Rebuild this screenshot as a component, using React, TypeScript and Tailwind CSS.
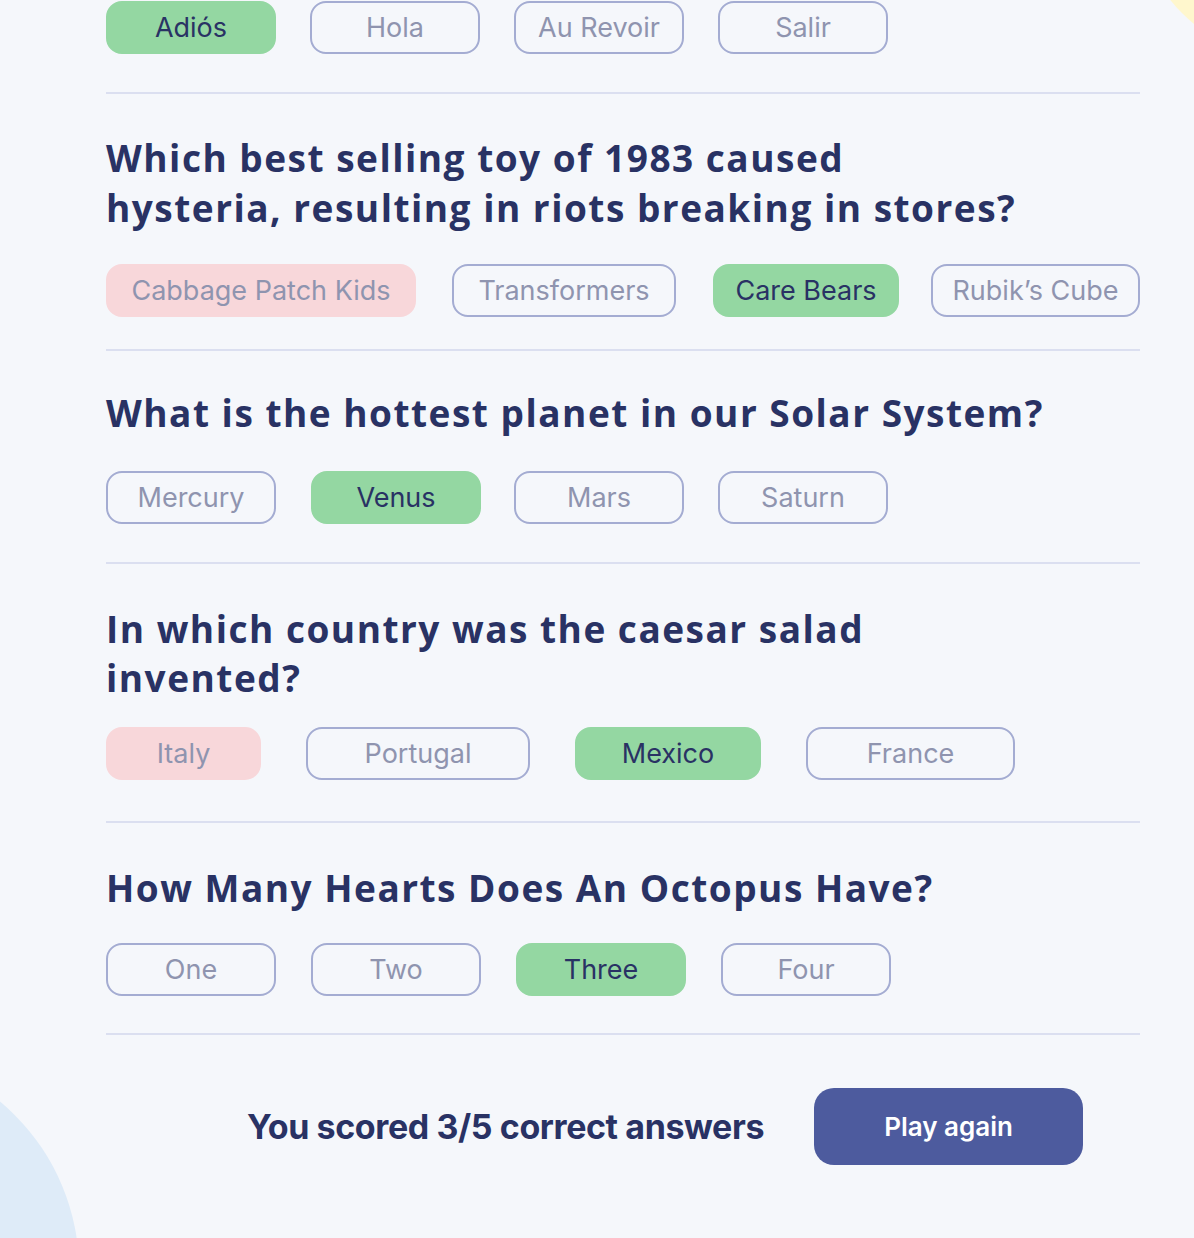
import React from "react";

type Kind = "plain" | "correct" | "wrong";

interface Answer {
  label: string;
  kind: Kind;
  cls: string;
}

interface Question {
  title?: string;
  titleCls: string;
  rowCls: string;
  dividerCls: string;
  answers: Answer[];
}

const questions: Question[] = [
  {
    titleCls: "",
    rowCls: "mt-[1px]",
    dividerCls: "mt-[38px]",
    answers: [
      { label: "Adiós", kind: "correct", cls: "w-[170px]" },
      { label: "Hola", kind: "plain", cls: "w-[170px] ml-[34px]" },
      { label: "Au Revoir", kind: "plain", cls: "w-[170px] ml-[34px]" },
      { label: "Salir", kind: "plain", cls: "w-[170px] ml-[34px]" },
    ],
  },
  {
    title: "Which best selling toy of 1983 caused hysteria, resulting in riots breaking in stores?",
    titleCls: "mt-[39px] max-w-[920px]",
    rowCls: "mt-[31px]",
    dividerCls: "mt-[32px]",
    answers: [
      { label: "Cabbage Patch Kids", kind: "wrong", cls: "w-[310px]" },
      { label: "Transformers", kind: "plain", cls: "w-[224px] ml-[36px]" },
      { label: "Care Bears", kind: "correct", cls: "w-[186px] ml-[37px]" },
      { label: "Rubik’s Cube", kind: "plain", cls: "w-[209px] ml-[32px]" },
    ],
  },
  {
    title: "What is the hottest planet in our Solar System?",
    titleCls: "mt-[37px]",
    rowCls: "mt-[33px]",
    dividerCls: "mt-[38px]",
    answers: [
      { label: "Mercury", kind: "plain", cls: "w-[170px]" },
      { label: "Venus", kind: "correct", cls: "w-[170px] ml-[35px]" },
      { label: "Mars", kind: "plain", cls: "w-[170px] ml-[33px]" },
      { label: "Saturn", kind: "plain", cls: "w-[170px] ml-[34px]" },
    ],
  },
  {
    title: "In which country was the caesar salad invented?",
    titleCls: "mt-[40px] max-w-[820px] !leading-[49px]",
    rowCls: "mt-[25px]",
    dividerCls: "mt-[41px]",
    answers: [
      { label: "Italy", kind: "wrong", cls: "w-[155px]" },
      { label: "Portugal", kind: "plain", cls: "w-[224px] ml-[45px]" },
      { label: "Mexico", kind: "correct", cls: "w-[186px] ml-[45px]" },
      { label: "France", kind: "plain", cls: "w-[209px] ml-[45px]" },
    ],
  },
  {
    title: "How Many Hearts Does An Octopus Have?",
    titleCls: "mt-[40px]",
    rowCls: "mt-[30px]",
    dividerCls: "mt-[37px]",
    answers: [
      { label: "One", kind: "plain", cls: "w-[170px]" },
      { label: "Two", kind: "plain", cls: "w-[170px] ml-[35px]" },
      { label: "Three", kind: "correct", cls: "w-[170px] ml-[35px]" },
      { label: "Four", kind: "plain", cls: "w-[170px] ml-[35px]" },
    ],
  },
];

function AnswerPill({ answer }: { answer: Answer }) {
  const look =
    answer.kind === "correct"
      ? "bg-[#94d7a2] text-[#293264] border-[#94d7a2]"
      : answer.kind === "wrong"
      ? "bg-[#f8d7da] text-[#8f94af] border-[#f8d7da]"
      : "bg-transparent text-[#8f94af] border-[#a4acd2]";
  return (
    <div
      className={`h-[53px] shrink-0 rounded-[16px] border-[2px] flex items-center justify-center text-[27px] leading-none ${look} ${answer.cls}`}
    >
      {answer.label}
    </div>
  );
}

export default function App() {
  return (
    <div
      className="relative w-[1194px] h-[1238px] overflow-hidden bg-[#f5f7fb]"
      style={{ fontFamily: "Inter, 'Liberation Sans', sans-serif" }}
    >
      {/* decorative blobs */}
      <div className="absolute left-[1138px] top-[-243px] w-[300px] h-[300px] rounded-full bg-[#fff7cd]" />
      <div className="absolute left-[-359px] top-[1051px] w-[438px] h-[438px] rounded-full bg-[#deebf8]" />

      <div className="relative pl-[106px] w-[1140px]">
        {questions.map((q, i) => (
          <section key={i}>
            {q.title && (
              <h2
                className={`text-[37px] leading-[50px] font-bold tracking-[1.5px] text-[#293264] ${q.titleCls}`}
                style={{ fontFamily: "'Open Sans', Lato, sans-serif" }}
              >
                {q.title}
              </h2>
            )}
            <div className={`flex ${q.rowCls}`}>
              {q.answers.map((a) => (
                <AnswerPill key={a.label} answer={a} />
              ))}
            </div>
            <div className={`h-[2px] bg-[#dbdff0] ${q.dividerCls}`} />
          </section>
        ))}

        <div className="flex items-center mt-[53px] pl-[141px]">
          <p className="text-[34px] font-bold text-[#293264] tracking-[-0.4px]">
            You scored 3/5 correct answers
          </p>
          <button className="ml-[50px] w-[269px] h-[77px] rounded-[20px] bg-[#4d5b9e] text-white text-[26px] font-semibold">
            Play again
          </button>
        </div>
      </div>
    </div>
  );
}
